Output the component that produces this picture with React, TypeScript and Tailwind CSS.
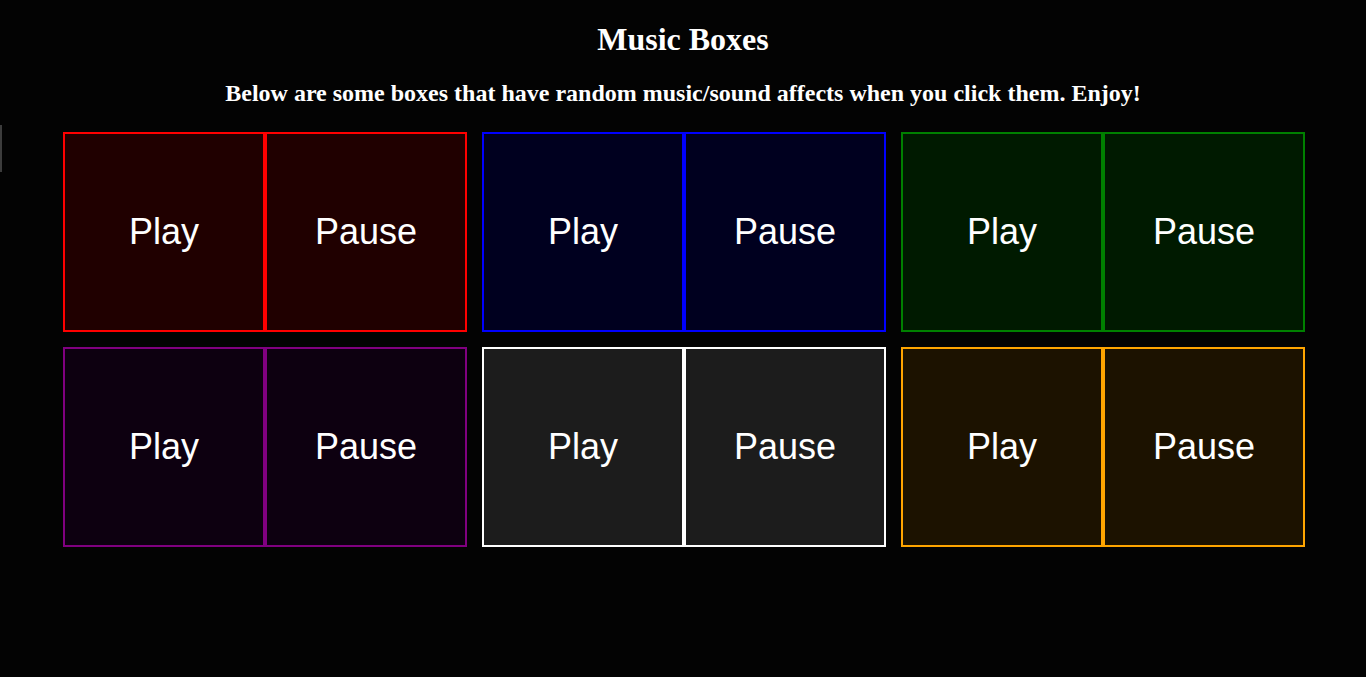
import React, { useState } from "react";

type Caja = { borde: string; fondo: string };

const cajas: Caja[] = [
  { borde: "border-[#ff0000]", fondo: "bg-[#200000]" },
  { borde: "border-[#0000ff]", fondo: "bg-[#00001f]" },
  { borde: "border-[#008000]", fondo: "bg-[#001a00]" },
  { borde: "border-[#800080]", fondo: "bg-[#0d0010]" },
  { borde: "border-[#ffffff]", fondo: "bg-[#1c1c1c]" },
  { borde: "border-[#ffa500]", fondo: "bg-[#1c1200]" },
];

function MusicBox({ caja }: { caja: Caja }) {
  const [sonando, setSonando] = useState(false);
  const boton = `w-[202px] h-[200px] border-2 ${caja.borde} ${caja.fondo} text-white text-[36px] flex items-center justify-center`;
  return (
    <div className="flex">
      <button className={boton} style={{ fontFamily: '"Liberation Sans", Arial, sans-serif' }} onClick={() => setSonando(true)}>
        Play
      </button>
      <button className={boton} style={{ fontFamily: '"Liberation Sans", Arial, sans-serif' }} onClick={() => setSonando(false)}>
        Pause
      </button>
      {sonando && <span className="sr-only">playing</span>}
    </div>
  );
}

export default function App() {
  return (
    <div className="relative min-h-[677px] bg-[#030303] text-white font-['Liberation_Serif','Times_New_Roman',serif] pt-[21px]">
      <div className="absolute left-0 top-[125px] w-[2px] h-[47px] bg-[#3c3c3c]" />
      <h1 className="text-[32px] font-bold text-center leading-[37px]">Music Boxes</h1>
      <h2 className="text-[24px] font-bold text-center leading-[28px] mt-[21px]">
        Below are some boxes that have random music/sound affects when you click them. Enjoy!
      </h2>
      <div className="mt-[25px] ml-[63px] w-[1245px] flex flex-wrap gap-x-[15px] gap-y-[15px]">
        {cajas.map((c, i) => (
          <MusicBox key={i} caja={c} />
        ))}
      </div>
    </div>
  );
}
